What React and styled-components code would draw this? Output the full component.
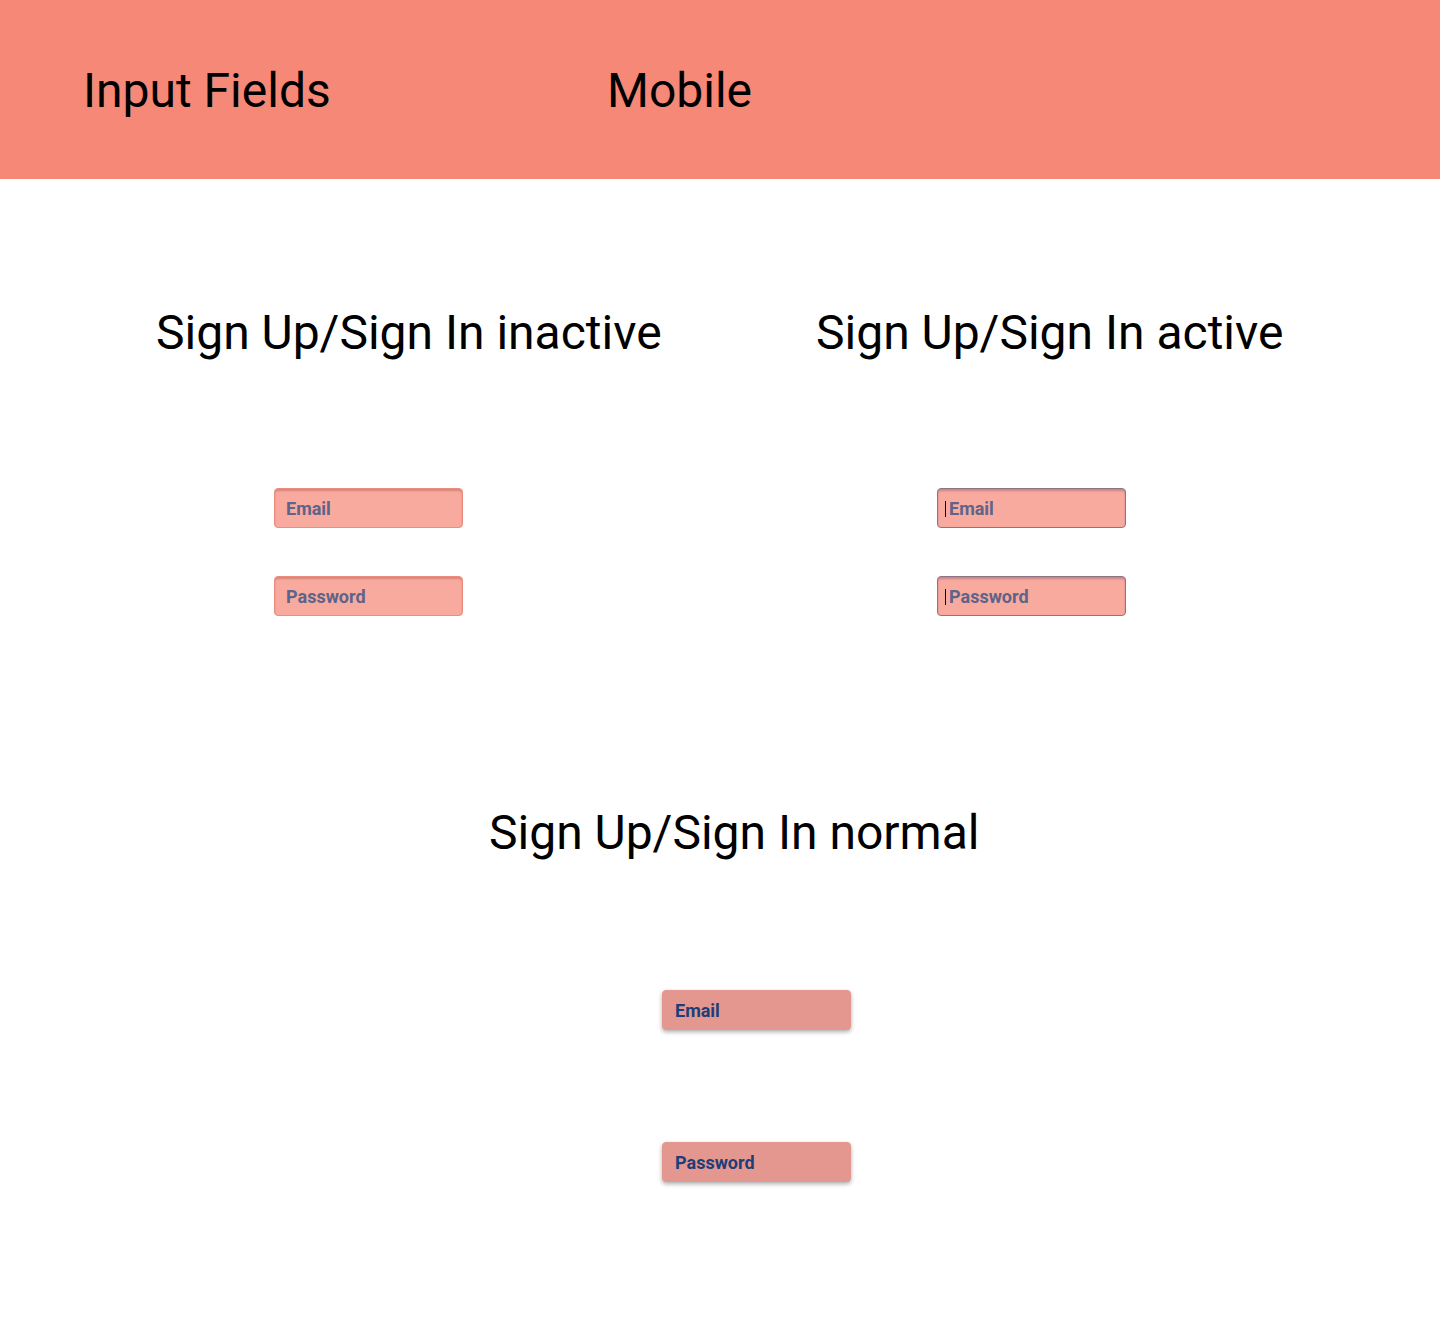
import React from "react";
import styled, { createGlobalStyle, css } from "styled-components";

const Global = createGlobalStyle`
  html, body { margin: 0; padding: 0; background: #ffffff; }
  body { font-family: Roboto, "Noto Sans", sans-serif; color: #000; }
  * { box-sizing: border-box; }
`;

const Page = styled.div`
  width: 1440px;
  min-height: 1340px;
  background: #ffffff;
`;

const Header = styled.header`
  height: 179px;
  background: #f58877;
  display: flex;
  align-items: center;
  padding-left: 83px;
  padding-top: 2px;
`;

const HeaderTitle = styled.h1`
  margin: 0;
  font-size: 48px;
  font-weight: 400;
  line-height: 48px;
  width: ${(p) => p.$width || "auto"};
`;

const Main = styled.main`
  display: flex;
  flex-direction: column;
`;

const Row = styled.div`
  display: flex;
  margin-top: ${(p) => p.$top}px;
`;

const Section = styled.section`
  display: flex;
  flex-direction: column;
  width: ${(p) => p.$width}px;
`;

const Heading = styled.h2`
  margin: 0 0 0 ${(p) => p.$x}px;
  font-size: 48px;
  font-weight: 400;
  line-height: 56px;
  white-space: nowrap;
`;

const Fields = styled.div`
  display: flex;
  flex-direction: column;
  gap: ${(p) => p.$gap}px;
  margin: ${(p) => p.$top}px 0 0 ${(p) => p.$x}px;
`;

const variants = {
  inactive: css`
    background: #f8aa9e;
    border: 1px solid #ec8c7e;
    box-shadow: inset 0 2px 2px rgba(150, 70, 60, 0.35);
    color: #5e6389;
  `,
  active: css`
    background: #f8aa9e;
    border: 1px solid #8e7385;
    box-shadow: inset 0 2px 2px rgba(110, 70, 90, 0.35);
    color: #5e6389;
  `,
  normal: css`
    background: #e4978e;
    border: 1px solid #e4978e;
    box-shadow: 0 2px 4px rgba(0, 0, 0, 0.32);
    color: #1c3e7a;
  `,
};

const Field = styled.div`
  width: 189px;
  height: 40px;
  border-radius: 4px;
  display: flex;
  align-items: center;
  padding-left: ${(p) => (p.$variant === "active" ? 7 : p.$variant === "normal" ? 12 : 11)}px;
  padding-top: 1px;
  font-size: 18px;
  font-weight: 700;
  ${(p) => variants[p.$variant]}
`;

const Caret = styled.span`
  display: inline-block;
  width: 1px;
  height: 16px;
  background: #000;
  margin-right: 3px;
`;

function InputBox({ variant, label }) {
  return (
    <Field $variant={variant}>
      {variant === "active" && <Caret />}
      {label}
    </Field>
  );
}

export default function App() {
  return (
    <Page>
      <Global />
      <Header>
        <HeaderTitle $width="524px">Input Fields</HeaderTitle>
        <HeaderTitle>Mobile</HeaderTitle>
      </Header>
      <Main>
        <Row $top={126}>
          <Section $width={662}>
            <Heading $x={156}>Sign Up/Sign In inactive</Heading>
            <Fields $x={274} $top={127} $gap={48}>
              <InputBox variant="inactive" label="Email" />
              <InputBox variant="inactive" label="Password" />
            </Fields>
          </Section>
          <Section $width={778}>
            <Heading $x={154}>Sign Up/Sign In active</Heading>
            <Fields $x={275} $top={127} $gap={48}>
              <InputBox variant="active" label="Email" />
              <InputBox variant="active" label="Password" />
            </Fields>
          </Section>
        </Row>
        <Row $top={189}>
          <Section $width={1440}>
            <Heading $x={489}>Sign Up/Sign In normal</Heading>
            <Fields $x={662} $top={129} $gap={112}>
              <InputBox variant="normal" label="Email" />
              <InputBox variant="normal" label="Password" />
            </Fields>
          </Section>
        </Row>
      </Main>
    </Page>
  );
}
